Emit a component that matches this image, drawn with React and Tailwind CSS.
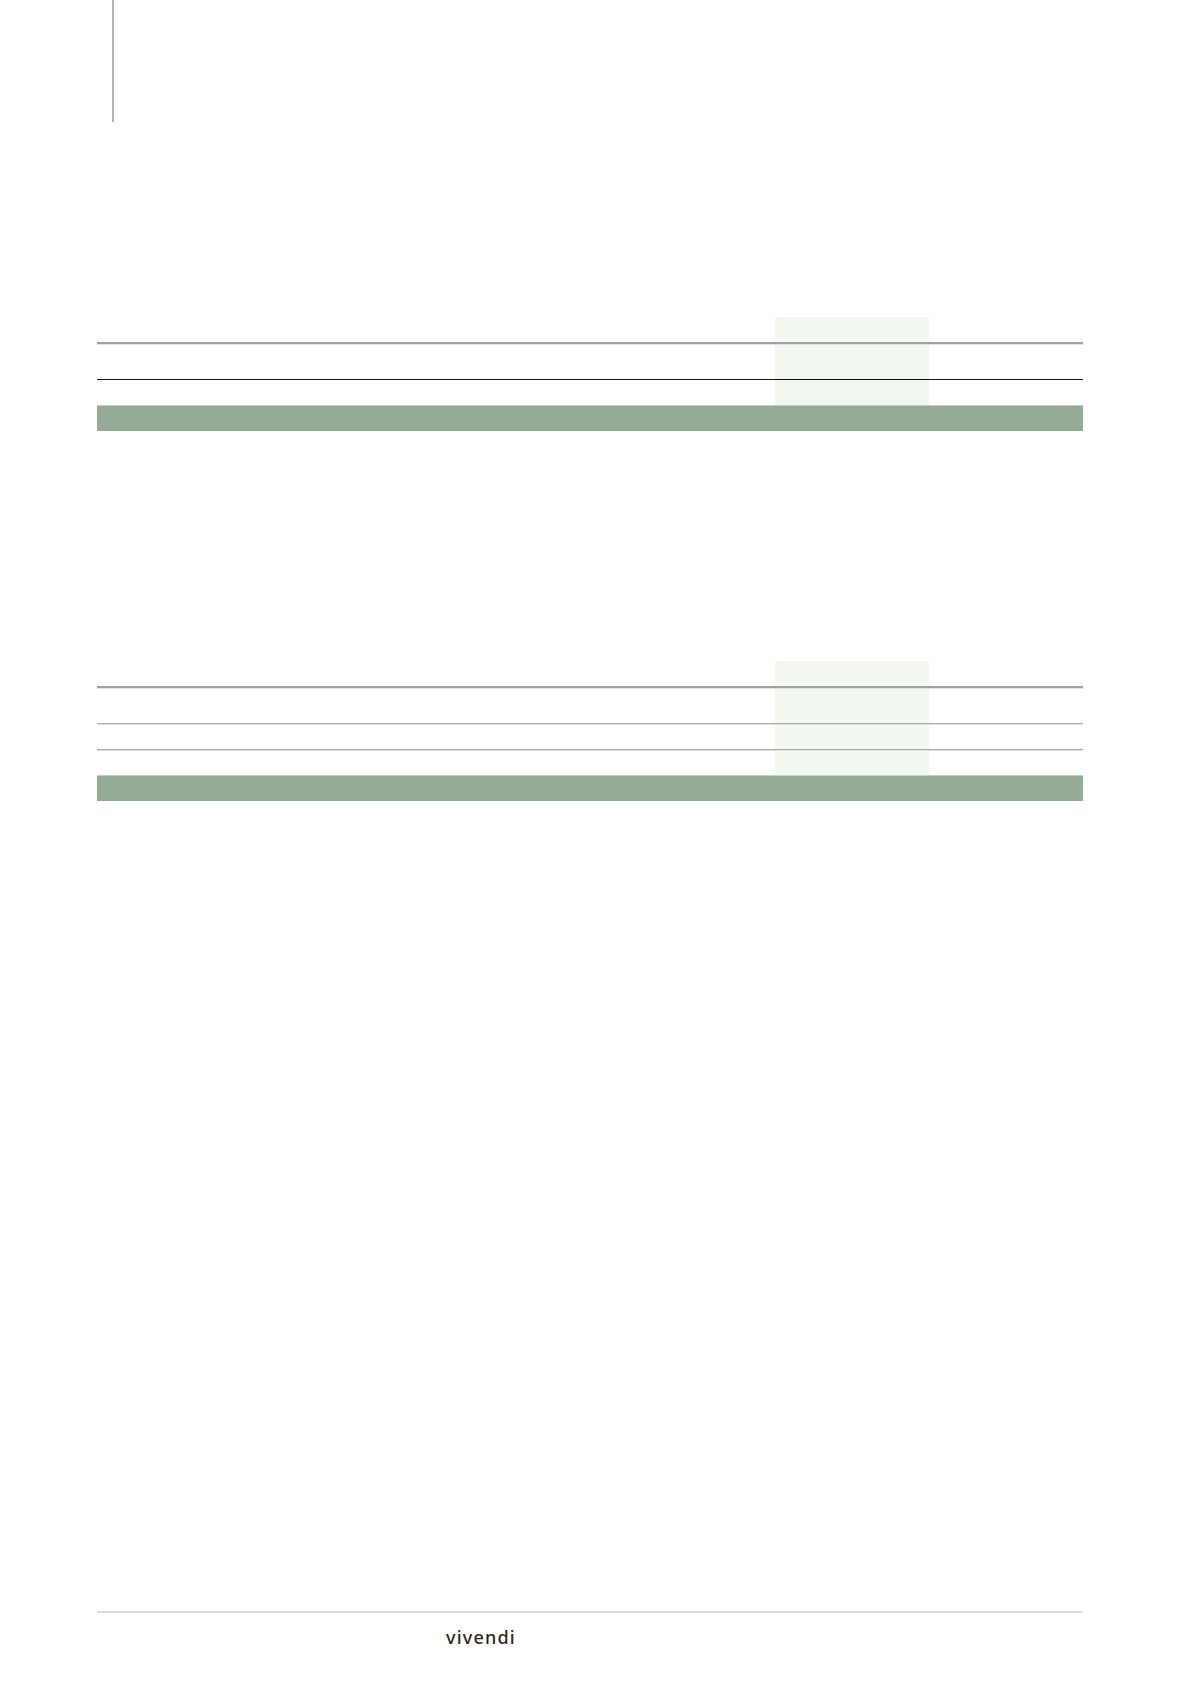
import React from 'react';

const LIGHT = 'bg-[#f2f7f0]';

// one row of the table: label cell, highlighted year column, last column
const Row = ({ h }) => (
  <div className={`grid grid-cols-[678px_154px_154px] ${h}`}>
    <div />
    <div className={LIGHT} />
    <div />
  </div>
);

const Rule = ({ dark }) => (
  <div className="flex flex-col">
    <div className={dark ? 'h-[2px] bg-[#a2a2a2]' : 'h-[1px] bg-[#aaaaaa]'} />
    <div className="h-[1px] bg-[#e2e2e2]" />
  </div>
);

const Bar = () => (
  <div className="h-[26px] bg-[#93ab94] border-t border-[#c3d1c2]" />
);

const App = () => {
  return (
    <div className="w-[1196px] h-[1692px] bg-white flex flex-col" style={{ fontFamily: '"Noto Sans", sans-serif' }}>
      {/* filet vertical en haut */}
      <div className="ml-[112px] w-[2px] h-[122px] bg-[#b6b6b0]" />

      {/* tableau 1 */}
      <div className="ml-[97px] w-[986px] mt-[195px] flex flex-col">
        <Row h="h-[25px]" />
        <Rule dark />
        <Row h="h-[34px]" />
        <div className="h-[1px] bg-[#111111]" />
        <Row h="h-[25px]" />
        <Bar />
      </div>

      {/* tableau 2 */}
      <div className="ml-[97px] w-[986px] mt-[230px] flex flex-col">
        <Row h="h-[25px]" />
        <Rule dark />
        <Row h="h-[34px]" />
        <Rule />
        <Row h="h-[24px]" />
        <Rule />
        <Row h="h-[24px]" />
        <Bar />
      </div>

      {/* pied de page */}
      <div className="ml-[97px] w-[986px] mt-[810px] h-[2px] bg-[#dcdcdc]" />
      <div className="ml-[446px] mt-[13px] text-[18px] leading-[22px] font-medium tracking-[1.2px] text-[#2a2622]">
        vivendi
      </div>
    </div>
  );
};

export default App;
